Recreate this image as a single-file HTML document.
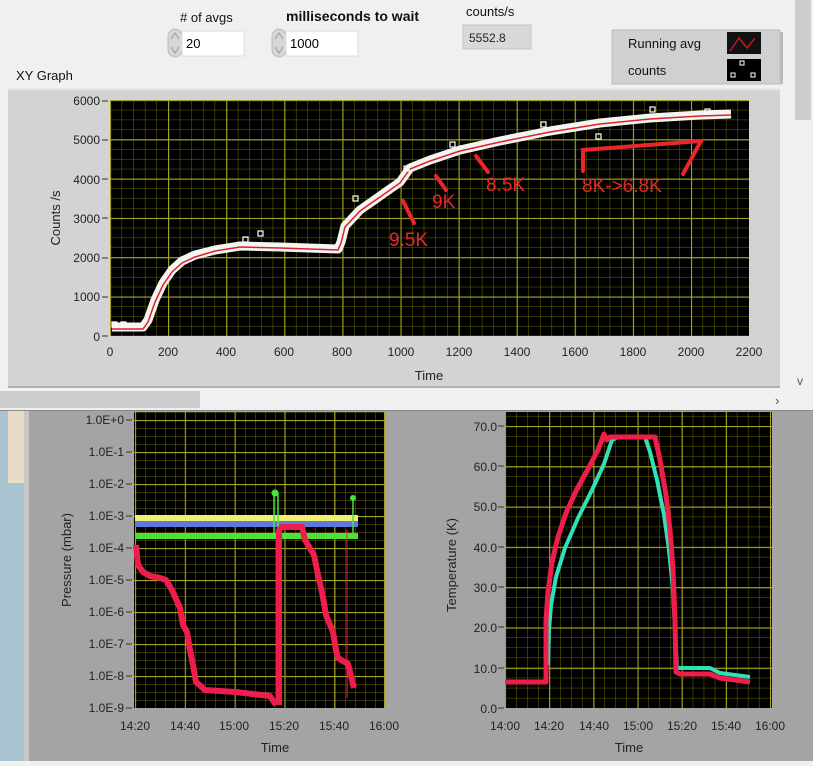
<!DOCTYPE html>
<html><head><meta charset="utf-8"><style>
body{margin:0;width:813px;height:761px;overflow:hidden;background:#f0f0f0;font-family:"Liberation Sans",sans-serif;}
svg text{font-family:"Liberation Sans",sans-serif;}
</style></head><body>
<svg width="813" height="761" xmlns="http://www.w3.org/2000/svg">
<defs>
<pattern id="g1" x="110" y="100" width="11.62" height="9.83" patternUnits="userSpaceOnUse"><path d="M0 0V9.83M0 0H11.62" stroke="#6b6b00" stroke-width="1" fill="none"/></pattern>
<pattern id="G1" x="110" y="100" width="58.1" height="39.3" patternUnits="userSpaceOnUse"><path d="M0.5 0V39.3M0 0.5H58.1" stroke="#a5a520" stroke-width="1.2" fill="none"/></pattern>
<pattern id="g2" x="135" y="420" width="10" height="8" patternUnits="userSpaceOnUse"><path d="M0 0V8M0 0H10" stroke="#6b6b00" stroke-width="1" fill="none"/></pattern>
<pattern id="G2" x="135" y="420" width="49.8" height="32" patternUnits="userSpaceOnUse"><path d="M0.5 0V32M0 0.5H49.8" stroke="#a5a520" stroke-width="1.2" fill="none"/></pattern>
<pattern id="g3" x="505" y="426" width="11.04" height="10.07" patternUnits="userSpaceOnUse"><path d="M0 0V10.07M0 0H11.04" stroke="#6b6b00" stroke-width="1" fill="none"/></pattern>
<pattern id="G3" x="505" y="426" width="44.17" height="40.3" patternUnits="userSpaceOnUse"><path d="M0.5 0V40.3M0 0.5H44.17" stroke="#a5a520" stroke-width="1.2" fill="none"/></pattern>
</defs>

<rect x="0" y="0" width="813" height="410" fill="#f0f0f0"/>
<text x="180" y="22" font-size="13" fill="#111">#  of avgs</text>
<text x="286" y="21" font-size="14" font-weight="bold" fill="#111">milliseconds to wait</text>
<text x="466" y="16" font-size="13" fill="#111">counts/s</text>
<rect x="168" y="29" width="14" height="28" rx="7" fill="#d6d6d6" stroke="#bbb"/>
<path d="M171 39l4-6 4 6M171 47l4 6 4-6" stroke="#999" fill="none"/>
<rect x="182" y="31" width="62" height="25" fill="#fff" stroke="#ddd"/>
<text x="186" y="48" font-size="13">20</text>
<rect x="272" y="29" width="14" height="28" rx="7" fill="#d6d6d6" stroke="#bbb"/>
<path d="M275 39l4-6 4 6M275 47l4 6 4-6" stroke="#999" fill="none"/>
<rect x="286" y="31" width="72" height="25" fill="#fff" stroke="#ddd"/>
<text x="290" y="48" font-size="13">1000</text>
<rect x="463" y="25" width="68" height="24" fill="#d8d8d8" stroke="#c4c4c4"/>
<text x="469" y="42" font-size="12" fill="#222">5552.8</text>
<rect x="612" y="30" width="168" height="54" fill="#d0d0d0" stroke="#bdbdbd"/>
<rect x="780" y="32" width="3" height="52" fill="#bbb"/>
<text x="628" y="48" font-size="13" fill="#111">Running avg</text>
<text x="628" y="75" font-size="13" fill="#111">counts</text>
<rect x="727" y="32" width="34" height="22" fill="#111"/>
<path d="M730 51l9-13 8 10 8-10" stroke="#c01818" stroke-width="1.5" fill="none"/>
<rect x="727" y="59" width="34" height="22" fill="#000"/>
<rect x="740" y="61" width="4" height="4" fill="none" stroke="#fff"/><rect x="731" y="73" width="4" height="4" fill="none" stroke="#fff"/><rect x="751" y="73" width="4" height="4" fill="none" stroke="#fff"/>
<text x="16" y="80" font-size="13" fill="#111">XY Graph</text>
<rect x="8" y="88" width="772" height="300" fill="#d3d3d3"/>
<rect x="8" y="88" width="772" height="2" fill="#e8e8e8"/>
<rect x="8" y="386" width="772" height="2" fill="#b0b0b0"/>
<rect x="110" y="100" width="639" height="236" fill="#000"/>
<rect x="110" y="100" width="639" height="236" fill="url(#g1)"/>
<rect x="110" y="100" width="639" height="236" fill="url(#G1)"/>
<g font-size="12" fill="#222" text-anchor="end">
<text x="100" y="105">6000</text><text x="100" y="144">5000</text><text x="100" y="184">4000</text><text x="100" y="223">3000</text><text x="100" y="262">2000</text><text x="100" y="301">1000</text><text x="100" y="341">0</text>
</g>
<g stroke="#333"><path d="M102 101h6M102 140h6M102 179h6M102 218h6M102 258h6M102 297h6M102 336h6"/></g>
<g font-size="12" fill="#222" text-anchor="middle">
<text x="110" y="356">0</text><text x="168" y="356">200</text><text x="226" y="356">400</text><text x="284" y="356">600</text><text x="342" y="356">800</text><text x="401" y="356">1000</text><text x="459" y="356">1200</text><text x="517" y="356">1400</text><text x="575" y="356">1600</text><text x="633" y="356">1800</text><text x="691" y="356">2000</text><text x="749" y="356">2200</text>
</g>
<text x="429" y="380" font-size="13" text-anchor="middle" fill="#222">Time</text>
<text transform="translate(60,218) rotate(-90)" font-size="13" text-anchor="middle" fill="#222">Counts /s</text>
<path d="M112 327H143L148 320L155 300L163 283L172 270L182 261L195 255L215 250L240 246L280 247L338 249L341 242L345 226L360 210L380 196L400 182L410 168L430 160L460 150L500 141L550 131L600 123L650 118L700 115L731 114" stroke="#f4f4f4" stroke-width="9" fill="none" stroke-linejoin="round"/>
<path d="M112 329H143L148 322L155 302L163 285L172 272L182 263L195 257L215 251L240 247L280 248L338 250L341 243L345 227L360 211L380 197L400 183L410 169L430 161L460 151L500 142L550 132L600 124L650 119L700 116L731 115" stroke="#d22" stroke-width="1.5" fill="none"/>
<g fill="none" stroke="#fff" stroke-width="1.2"><rect x="112" y="322" width="5" height="5"/><rect x="121" y="322" width="5" height="5"/><rect x="258" y="231" width="5" height="5"/><rect x="243" y="237" width="5" height="5"/><rect x="353" y="196" width="5" height="5"/><rect x="404" y="166" width="5" height="5"/><rect x="450" y="142" width="5" height="5"/><rect x="541" y="122" width="5" height="5"/><rect x="650" y="107" width="5" height="5"/><rect x="705" y="109" width="5" height="5"/><rect x="596" y="134" width="5" height="5"/></g>
<g stroke="#e8262c" stroke-width="4" fill="none" stroke-linecap="round">
<path d="M403 201L414 223"/><path d="M436 176L446 190"/><path d="M476 156L488 172"/><path d="M583 171V150L701 141L683 174"/>
</g>
<g font-size="19" fill="#e8262c">
<text x="389" y="246">9.5K</text><text x="432" y="208">9K</text><text x="486" y="191">8.5K</text><text x="582" y="192">8K-&gt;6.8K</text>
</g>
<rect x="793" y="0" width="20" height="410" fill="#f0f0f0"/>
<rect x="795" y="0" width="16" height="120" fill="#cdcdcd"/>
<text x="797" y="385" font-size="12" fill="#555">v</text>
<rect x="0" y="390" width="793" height="20" fill="#f0f0f0"/>
<rect x="0" y="391" width="200" height="17" fill="#cdcdcd"/>
<text x="775" y="405" font-size="13" fill="#555">›</text>
<rect x="0" y="410" width="813" height="1" fill="#888"/>

<rect x="0" y="411" width="813" height="350" fill="#a4a4a4"/>
<rect x="0" y="411" width="24" height="350" fill="#a9c3d0"/>
<rect x="8" y="411" width="18" height="72" fill="#e8dcc6"/>
<rect x="24" y="411" width="5" height="350" fill="#c9c9c9"/>
<rect x="134" y="412" width="251" height="296" fill="#000"/>
<rect x="134" y="412" width="251" height="296" fill="url(#g2)"/>
<rect x="134" y="412" width="251" height="296" fill="url(#G2)"/>
<g font-size="12" fill="#222" text-anchor="end">
<text x="124" y="424">1.0E+0</text><text x="124" y="456">1.0E-1</text><text x="124" y="488">1.0E-2</text><text x="124" y="520">1.0E-3</text><text x="124" y="552">1.0E-4</text><text x="124" y="584">1.0E-5</text><text x="124" y="616">1.0E-6</text><text x="124" y="648">1.0E-7</text><text x="124" y="680">1.0E-8</text><text x="124" y="712">1.0E-9</text>
</g>
<g stroke="#333"><path d="M126 420h6M126 452h6M126 484h6M126 516h6M126 548h6M126 580h6M126 612h6M126 644h6M126 676h6M126 708h6"/></g>
<g font-size="12" fill="#222" text-anchor="middle">
<text x="135" y="730">14:20</text><text x="185" y="730">14:40</text><text x="234" y="730">15:00</text><text x="284" y="730">15:20</text><text x="334" y="730">15:40</text><text x="384" y="730">16:00</text>
</g>
<text x="275" y="752" font-size="13" text-anchor="middle" fill="#222">Time</text>
<text transform="translate(71,560) rotate(-90)" font-size="13" text-anchor="middle" fill="#222">Pressure (mbar)</text>
<rect x="135" y="515" width="223" height="6" fill="#f0f070"/>
<rect x="135" y="521" width="223" height="6" fill="#5a7ae0"/>
<path d="M135 536H358" stroke="#4ce23c" stroke-width="6"/>
<path d="M274 535V493M278 535V493M353 536V498" stroke="#4ce23c" stroke-width="1.5"/>
<circle cx="275" cy="493" r="3.5" fill="#4ce23c"/><circle cx="353" cy="498" r="3" fill="#4ce23c"/>
<path d="M136 545L138 565L143 572L150 576L160 578L166 580L172 590L180 608L183 625L187 632L190 650L193 665L196 682L205 690L235 692L270 696L276 705" stroke="#ee1e4c" stroke-width="6" fill="none" stroke-linejoin="round"/>
<path d="M279 705V530L282 527H302L305 540L314 555L318 575L322 592L326 615L333 632L336 650L338 658L348 664L354 688" stroke="#ee1e4c" stroke-width="6" fill="none" stroke-linejoin="round"/>
<path d="M347 530V698" stroke="#ee1e4c" stroke-width="1"/>
<rect x="505" y="412" width="267" height="296" fill="#000"/>
<rect x="505" y="412" width="267" height="296" fill="url(#g3)"/>
<rect x="505" y="412" width="267" height="296" fill="url(#G3)"/>
<g font-size="12" fill="#222" text-anchor="end">
<text x="497" y="431">70.0</text><text x="497" y="471">60.0</text><text x="497" y="511">50.0</text><text x="497" y="552">40.0</text><text x="497" y="592">30.0</text><text x="497" y="632">20.0</text><text x="497" y="673">10.0</text><text x="497" y="713">0.0</text>
</g>
<g stroke="#333"><path d="M498 426h6M498 466h6M498 507h6M498 547h6M498 587h6M498 627h6M498 668h6M498 708h6"/></g>
<g font-size="12" fill="#222" text-anchor="middle">
<text x="505" y="730">14:00</text><text x="549" y="730">14:20</text><text x="594" y="730">14:40</text><text x="638" y="730">15:00</text><text x="682" y="730">15:20</text><text x="726" y="730">15:40</text><text x="770" y="730">16:00</text>
</g>
<text x="629" y="752" font-size="13" text-anchor="middle" fill="#222">Time</text>
<text transform="translate(456,565) rotate(-90)" font-size="13" text-anchor="middle" fill="#222">Temperature (K)</text>
<path d="M548 665L549 630L551 605L556 577L565 548L578 518L592 490L604 464L612 440L618 437H645L650 452L657 480L664 515L669 550L673 590L675 630L677 668H710L720 673L750 677" stroke="#32e0b8" stroke-width="4" fill="none" stroke-linejoin="round"/>
<path d="M505 682H546L546 620L548 592L552 562L558 537L566 513L576 491L588 469L598 450L604 434L607 440L610 437H655L660 460L666 495L670 530L673 570L675 620L676 672L680 674H710L720 678L750 682" stroke="#ee1e4c" stroke-width="5" fill="none" stroke-linejoin="round"/>
</svg>
</body></html>
